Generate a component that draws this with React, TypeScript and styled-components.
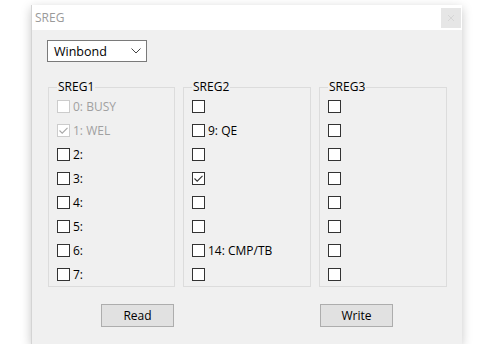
import styled, { createGlobalStyle } from 'styled-components';

const GlobalStyle = createGlobalStyle`
  html, body {
    margin: 0;
    padding: 0;
    background: #ffffff;
  }
  body {
    font-family: 'Open Sans', 'Noto Sans', sans-serif;
    font-size: 12px;
  }
`;

type Bit = { label?: string; checked?: boolean; disabled?: boolean };

const sreg1: Bit[] = [
  { label: '0: BUSY', disabled: true },
  { label: '1: WEL', checked: true, disabled: true },
  { label: '2:' },
  { label: '3:' },
  { label: '4:' },
  { label: '5:' },
  { label: '6:' },
  { label: '7:' },
];

const sreg2: Bit[] = [
  {},
  { label: '9: QE' },
  {},
  { checked: true },
  {},
  {},
  { label: '14: CMP/TB' },
  {},
];

const sreg3: Bit[] = [{}, {}, {}, {}, {}, {}, {}, {}];

function CheckRow({ bit }: { bit: Bit }) {
  return (
    <Row $disabled={bit.disabled}>
      <Box $disabled={bit.disabled}>
        {bit.checked && (
          <svg width='11' height='11' viewBox='0 0 11 11'>
            <path
              d='M1.5 5.5 L4.2 8.2 L9.5 2.8'
              fill='none'
              stroke={bit.disabled ? '#a8a8a8' : '#333333'}
              strokeWidth='1.1'
            />
          </svg>
        )}
      </Box>
      {bit.label && <span>{bit.label}</span>}
    </Row>
  );
}

function Group({ title, bits }: { title: string; bits: Bit[] }) {
  return (
    <GroupBox>
      <legend>{title}</legend>
      {bits.map((b, i) => (
        <CheckRow key={i} bit={b} />
      ))}
    </GroupBox>
  );
}

export default function App() {
  return (
    <>
      <GlobalStyle />
      <Page>
        <Window>
          <TitleBar>
            <span>SREG</span>
            <CloseButton>
              <svg width='8' height='8' viewBox='0 0 8 8'>
                <path d='M1 1 L7 7 M7 1 L1 7' stroke='#d6d6d6' strokeWidth='1' />
              </svg>
            </CloseButton>
          </TitleBar>
          <Body>
            <Select>
              <span>Winbond</span>
              <svg width='10' height='6' viewBox='0 0 10 6'>
                <path d='M0.5 0.5 L5 5 L9.5 0.5' fill='none' stroke='#444' strokeWidth='1' />
              </svg>
            </Select>
            <Groups>
              <Group title='SREG1' bits={sreg1} />
              <Group title='SREG2' bits={sreg2} />
              <Group title='SREG3' bits={sreg3} />
            </Groups>
            <Buttons>
              <Button $align='end'>Read</Button>
              <span />
              <Button $align='start'>Write</Button>
            </Buttons>
          </Body>
        </Window>
      </Page>
    </>
  );
}

const Page = styled.div`
  padding: 5px 0 0 31px;
`;

const Window = styled.div`
  width: 431px;
  height: 339px;
  display: flex;
  flex-direction: column;
  background: #f0f0f0;
  border-left: 1px solid #d4d4d4;
  box-shadow: 0 3px 10px rgba(0, 0, 0, 0.22);
  box-sizing: border-box;
`;

const TitleBar = styled.div`
  height: 25px;
  display: flex;
  align-items: center;
  justify-content: space-between;
  background: #ffffff;
  padding: 0 1px 0 3px;
  color: #9a9a9a;
  font-size: 12px;
`;

const CloseButton = styled.div`
  width: 20px;
  height: 20px;
  display: flex;
  align-items: center;
  justify-content: center;
  background: #e6e6e6;
`;

const Body = styled.div`
  flex: 1;
  display: flex;
  flex-direction: column;
  padding: 10px 15px 0 15px;
`;

const Select = styled.div`
  width: 100px;
  height: 22px;
  box-sizing: border-box;
  display: flex;
  align-items: center;
  justify-content: space-between;
  padding: 0 5px 0 6px;
  background: #ffffff;
  border: 1px solid #7a7a7a;
  color: #000;
  font-size: 12.5px;
`;

const Groups = styled.div`
  display: grid;
  grid-template-columns: 127px 128px 128px;
  column-gap: 8px;
  margin: 18px 0 0 1px;
`;

const GroupBox = styled.fieldset`
  margin: 0;
  padding: 0 0 0 8px;
  border: 1px solid #dcdcdc;
  min-width: 0;
  > legend {
    margin-left: 0;
    padding: 0 1px;
    line-height: 14px;
    font-size: 12px;
    color: #000;
  }
`;

const Row = styled.div<{ $disabled?: boolean }>`
  height: 24px;
  display: flex;
  align-items: center;
  gap: 3px;
  color: ${(p) => (p.$disabled ? '#a0a0a0' : '#000')};
  font-size: 12px;
`;

const Box = styled.span<{ $disabled?: boolean }>`
  width: 13px;
  height: 13px;
  box-sizing: border-box;
  display: flex;
  align-items: center;
  justify-content: center;
  background: #ffffff;
  border: 1px solid ${(p) => (p.$disabled ? '#cccccc' : '#333333')};
`;

const Buttons = styled.div`
  display: grid;
  grid-template-columns: 127px 128px 128px;
  column-gap: 8px;
  margin: 17px 0 0 1px;
`;

const Button = styled.div<{ $align: 'start' | 'end' }>`
  justify-self: ${(p) => p.$align};
  margin: 0 1px;
  width: 73px;
  height: 23px;
  box-sizing: border-box;
  display: flex;
  align-items: center;
  justify-content: center;
  background: #e1e1e1;
  border: 1px solid #adadad;
  color: #000;
  font-size: 12px;
`;
